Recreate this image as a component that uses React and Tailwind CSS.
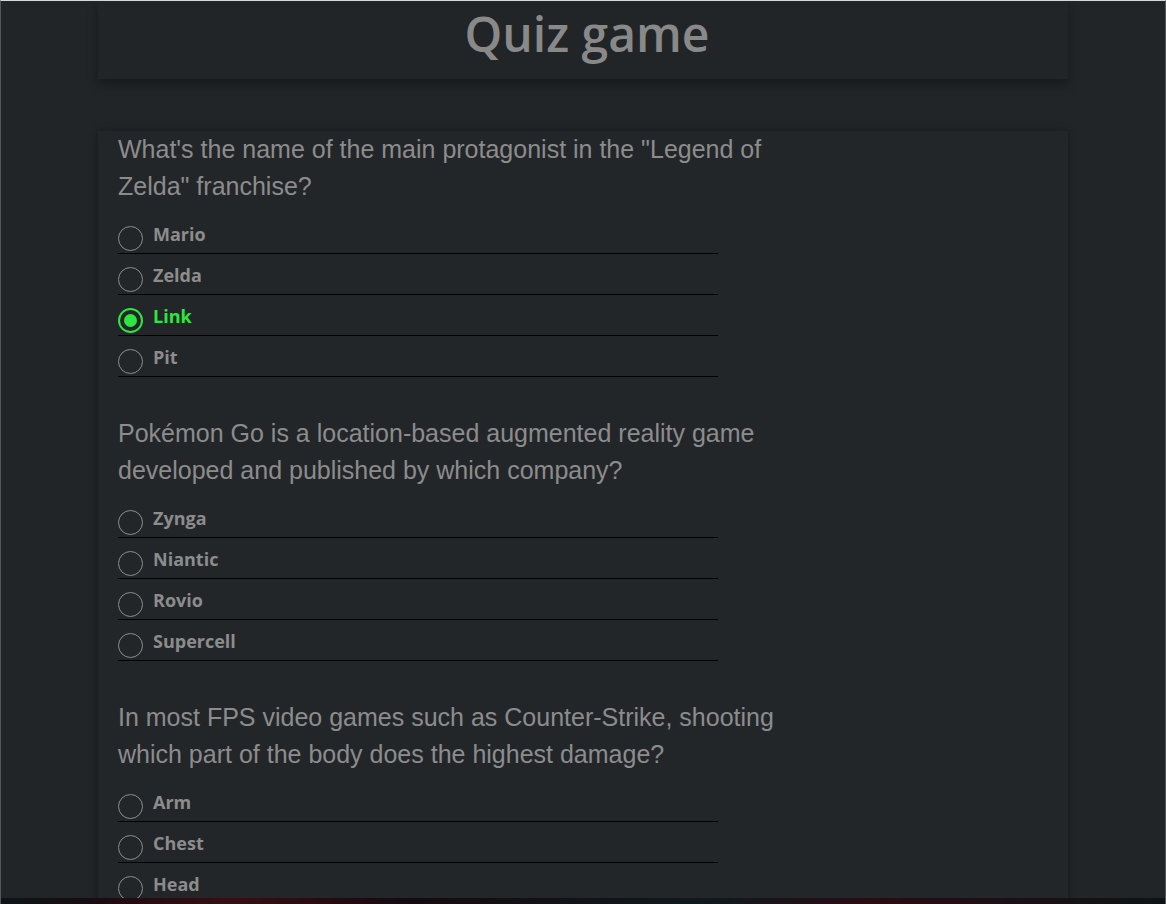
import React, { useState } from "react";

const QUESTIONS = [
  {
    id: 1,
    text: 'What\'s the name of the main protagonist in the "Legend of Zelda" franchise?',
    answers: ["Mario", "Zelda", "Link", "Pit"],
  },
  {
    id: 2,
    text: "Pokémon Go is a location-based augmented reality game developed and published by which company?",
    answers: ["Zynga", "Niantic", "Rovio", "Supercell"],
  },
  {
    id: 3,
    text: "In most FPS video games such as Counter-Strike, shooting which part of the body does the highest damage?",
    answers: ["Arm", "Chest", "Head", "Leg"],
  },
];

function Option({ label, checked, onSelect }) {
  return (
    <label
      onClick={onSelect}
      className="flex h-[41px] w-[600px] cursor-pointer items-end border-b border-black"
    >
      <span
        className={
          checked
            ? "mb-[2px] flex h-[25px] w-[25px] shrink-0 items-center justify-center rounded-full border-2 border-[#2ee63f]"
            : "mb-[2px] flex h-[25px] w-[25px] shrink-0 items-center justify-center rounded-full border-[1.5px] border-[#8c8c8c]"
        }
      >
        {checked && <span className="h-[13px] w-[13px] rounded-full bg-[#2ee63f]" />}
      </span>
      <span
        className={
          checked
            ? "mb-[6px] ml-[10px] text-[18px] font-bold leading-[26px] text-[#2ee63f]"
            : "mb-[6px] ml-[10px] text-[18px] font-bold leading-[26px] text-[#8c8c8c]"
        }
        style={{ fontFamily: '"Open Sans", "Noto Sans", sans-serif' }}
      >
        {label}
      </span>
    </label>
  );
}

export default function App() {
  const [picked, setPicked] = useState({ 1: "Link" });

  return (
    <div className="flex h-[904px] flex-col overflow-hidden border-x border-t border-x-[#55595d] border-t-[#d9d9d9] bg-[#222528]">
      <div className="flex-1 overflow-hidden">
        <header className="mx-auto flex h-[78px] w-[970px] items-start justify-center bg-[#222528] shadow-[0_5px_10px_rgba(0,0,0,0.35)]">
          <h1
            className="ml-[8px] mt-[1px] text-[48px] font-semibold leading-[64px] text-[#898989]"
            style={{ fontFamily: '"Open Sans", "Noto Sans", sans-serif' }}
          >
            Quiz game
          </h1>
        </header>

        <main className="mx-auto mt-[52px] w-[970px] bg-[#232629] px-[20px] shadow-[0_0_8px_rgba(0,0,0,0.35)]">
          {QUESTIONS.map((q) => (
            <section key={q.id} className="mb-[38px]">
              <p
                className="mb-[8px] w-[680px] text-[25px] leading-[37px] text-[#8c8c8c]"
                style={{ fontFamily: '"Liberation Sans", Arial, sans-serif' }}
              >
                {q.text}
              </p>
              <div className="flex flex-col">
                {q.answers.map((a) => (
                  <Option
                    key={a}
                    label={a}
                    checked={picked[q.id] === a}
                    onSelect={() => setPicked({ ...picked, [q.id]: a })}
                  />
                ))}
              </div>
            </section>
          ))}
        </main>
      </div>
      <div className="h-[6px] shrink-0 bg-[linear-gradient(90deg,#0d1518_0%,#1a0c10_8%,#3a0d14_20%,#150a0e_35%,#0f1a1f_60%,#2a0c12_75%,#0d1416_100%)]" />
    </div>
  );
}
